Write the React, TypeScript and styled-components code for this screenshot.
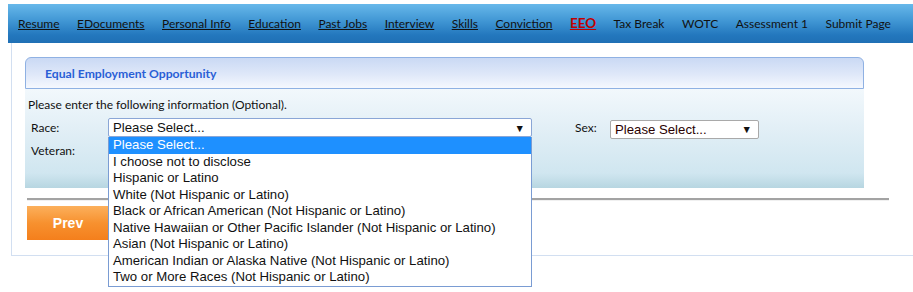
import React from 'react';
import styled, { createGlobalStyle } from 'styled-components';

const GlobalStyle = createGlobalStyle`
  body {
    margin: 0;
    background: #fff;
    font-family: Lato, 'Liberation Sans', sans-serif;
    color: #111;
  }
`;

const Page = styled.div`
  padding: 4px 0 0 8px;
  width: 905px;
  min-height: 288px;
`;

const NavBar = styled.nav`
  height: 39px;
  display: flex;
  align-items: center;
  justify-content: space-between;
  padding: 0 22px 1px 10px;
  box-sizing: border-box;
  background: linear-gradient(#67b8ea 0%, #3f95d3 45%, #2377bd 80%, #1f70b5 100%);
`;

const NavLink = styled.a<{ $active?: boolean; $plain?: boolean }>`
  color: ${(p) => (p.$active ? '#c00000' : '#111')};
  font-weight: ${(p) => (p.$active ? 700 : 400)};
  font-size: ${(p) => (p.$active ? '13.5px' : '12px')};
  text-decoration: ${(p) => (p.$plain ? 'none' : 'underline')};
  white-space: nowrap;
`;

const Frame = styled.div`
  margin-left: 3px;
  width: 892px;
  border: 1px solid #d2dff1;
  border-top: none;
  padding: 14px 0 15px 13px;
`;

const Panel = styled.section`
  width: 839px;
`;

const PanelHeader = styled.div`
  height: 30px;
  display: flex;
  align-items: center;
  padding-left: 19px;
  border: 1px solid #8fb1e3;
  border-radius: 6px 6px 0 0;
  background: linear-gradient(#cad9f4, #dfe8f9 55%, #f5f8fe);
  color: #2a5fd6;
  font-size: 12.2px;
  font-weight: 700;
`;

const PanelBody = styled.div`
  height: 99px;
  box-sizing: border-box;
  padding: 9px 3px 0;
  background: linear-gradient(#f2f8fc, #e2eff6 40%, #d0e6f0 85%, #b7d6e1);
  font-size: 12px;
`;

const Intro = styled.div`
  height: 14px;
  line-height: 14px;
  margin-bottom: 6px;
`;

const FormRow = styled.div`
  display: flex;
  align-items: center;
  height: 19px;
  margin-bottom: 4px;
`;

const Label = styled.label<{ $width: number; $gap?: number }>`
  width: ${(p) => p.$width}px;
  margin-left: ${(p) => p.$gap || 0}px;
  padding-left: ${(p) => (p.$gap ? 0 : 3)}px;
  box-sizing: border-box;
  font-size: 12px;
`;

const SelectWrap = styled.div`
  position: relative;
`;

const SelectBox = styled.div<{ $width: number; $color?: string; $border?: string; $drop?: number }>`
  width: ${(p) => p.$width}px;
  height: 19px;
  margin-top: ${(p) => (p.$drop || 0) * 2}px;
  box-sizing: border-box;
  border: 1px solid ${(p) => p.$border || '#8aa6d6'};
  border-radius: 2px;
  background: #fff;
  display: flex;
  align-items: center;
  justify-content: space-between;
  padding: 0 6px 0 4px;
  font-family: 'Liberation Sans', Arial, sans-serif;
  font-size: 13.2px;
  color: ${(p) => p.$color || '#111'};
`;

const Arrow = styled.span`
  font-size: 10.5px;
  color: #111;
`;

const OptionList = styled.ul`
  position: absolute;
  top: 100%;
  left: 0;
  margin: 0;
  padding: 0;
  list-style: none;
  width: 424px;
  box-sizing: border-box;
  border: 1px solid #7a9cd3;
  border-top: none;
  background: #fff;
  z-index: 5;
`;

const Option = styled.li<{ $selected?: boolean }>`
  height: 16.5px;
  line-height: 16.5px;
  padding-left: 4px;
  font-family: 'Liberation Sans', Arial, sans-serif;
  font-size: 13.2px;
  white-space: nowrap;
  background: ${(p) => (p.$selected ? '#1e90ff' : '#fff')};
  color: ${(p) => (p.$selected ? '#fff' : '#111')};
`;

const Divider = styled.hr`
  margin: 10px 0 0 2px;
  width: 862px;
  height: 0;
  border: none;
  border-top: 2px solid #a3a3a3;
  border-bottom: 1px solid #f0f0f0;
`;

const PrevButton = styled.button`
  margin: 5px 0 0 2px;
  width: 82px;
  height: 34px;
  border: none;
  background: linear-gradient(#fcb05c, #f7912f 50%, #f47f1c);
  color: #fff;
  font-family: 'Liberation Sans', Arial, sans-serif;
  font-weight: 700;
  font-size: 14px;
`;

const navItems = [
  { label: 'Resume' },
  { label: 'EDocuments' },
  { label: 'Personal Info' },
  { label: 'Education' },
  { label: 'Past Jobs' },
  { label: 'Interview' },
  { label: 'Skills' },
  { label: 'Conviction' },
  { label: 'EEO', active: true },
  { label: 'Tax Break', plain: true },
  { label: 'WOTC', plain: true },
  { label: 'Assessment 1', plain: true },
  { label: 'Submit Page', plain: true },
];

const raceOptions = [
  'Please Select...',
  'I choose not to disclose',
  'Hispanic or Latino',
  'White (Not Hispanic or Latino)',
  'Black or African American (Not Hispanic or Latino)',
  'Native Hawaiian or Other Pacific Islander (Not Hispanic or Latino)',
  'Asian (Not Hispanic or Latino)',
  'American Indian or Alaska Native (Not Hispanic or Latino)',
  'Two or More Races (Not Hispanic or Latino)',
];

const App = () => {
  return (
    <Page>
      <GlobalStyle />
      <NavBar>
        {navItems.map((n) => (
          <NavLink key={n.label} $active={n.active} $plain={n.plain}>
            {n.label}
          </NavLink>
        ))}
      </NavBar>
      <Frame>
        <Panel>
          <PanelHeader>Equal Employment Opportunity</PanelHeader>
          <PanelBody>
            <Intro>Please enter the following information (Optional).</Intro>
            <FormRow>
              <Label $width={80}>Race:</Label>
              <SelectWrap>
                <SelectBox $width={424}>
                  Please Select...
                  <Arrow>▼</Arrow>
                </SelectBox>
                {/* opened list of the race select */}
                <OptionList>
                  {raceOptions.map((o, i) => (
                    <Option key={o} $selected={i === 0}>
                      {o}
                    </Option>
                  ))}
                </OptionList>
              </SelectWrap>
              <Label $width={35} $gap={43}>
                Sex:
              </Label>
              <SelectBox $width={149} $color="#2a0000" $border="#a9a9a9" $drop={1.5}>
                Please Select...
                <Arrow>▼</Arrow>
              </SelectBox>
            </FormRow>
            <FormRow>
              <Label $width={80}>Veteran:</Label>
            </FormRow>
          </PanelBody>
        </Panel>
        <Divider />
        <PrevButton>Prev</PrevButton>
      </Frame>
    </Page>
  );
};

export default App;
